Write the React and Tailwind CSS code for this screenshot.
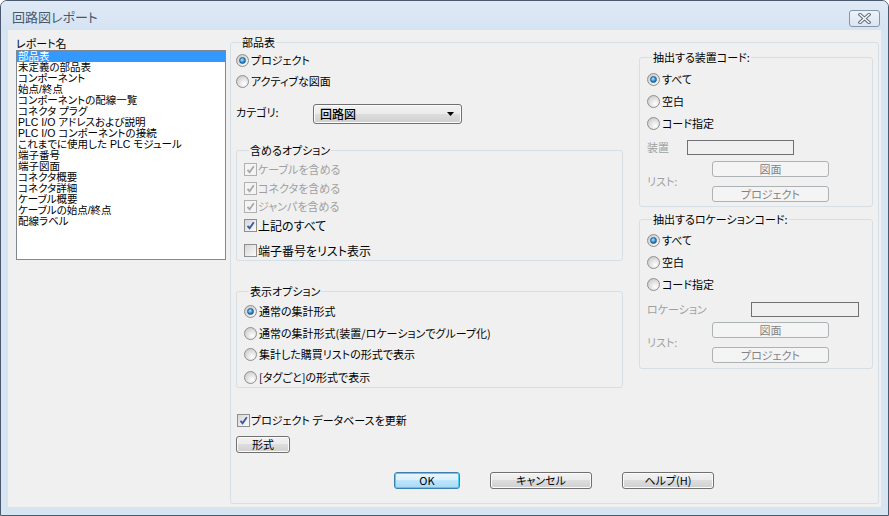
import React from 'react';

const reports = [
  '部品表',
  '未定義の部品表',
  'コンポーネント',
  '始点/終点',
  'コンポーネントの配線一覧',
  'コネクタ プラグ',
  'PLC I/O アドレスおよび説明',
  'PLC I/O コンポーネントの接続',
  'これまでに使用した PLC モジュール',
  '端子番号',
  '端子図面',
  'コネクタ概要',
  'コネクタ詳細',
  'ケーブル概要',
  'ケーブルの始点/終点',
  '配線ラベル',
];

function Radio({ checked, label, className = '' }) {
  return (
    <div className={`flex h-[13px] items-center gap-[2px] ${className}`}>
      <span className="flex h-[13px] w-[13px] shrink-0 items-center justify-center rounded-full border border-[#8e8f8f] bg-[radial-gradient(circle_at_65%_70%,#ffffff,#d0d0d0_75%)]">
        {checked && (
          <span className="h-[7px] w-[7px] rounded-full border border-[#1b5b8f] bg-[radial-gradient(circle_at_40%_35%,#b8e8ff,#2f8ad0_55%,#0f4f86)]" />
        )}
      </span>
      <span className="leading-[13px]">{label}</span>
    </div>
  );
}

function Check({ checked, disabled, label, className = '' }) {
  return (
    <div className={`flex h-[13px] items-center gap-[1px] ${className}`}>
      <span
        className={
          disabled
            ? 'flex h-[13px] w-[13px] shrink-0 items-center justify-center border border-[#b1b1b1] bg-[#f4f4f4]'
            : 'flex h-[13px] w-[13px] shrink-0 items-center justify-center border border-[#8e8f8f] bg-[linear-gradient(135deg,#d6d6d6,#fbfbfb)]'
        }
      >
        {checked && (
          <svg width="9" height="9" viewBox="0 0 9 9">
            <path
              d="M1.5 4.8 L3.6 7.2 L7.8 1.2"
              fill="none"
              stroke={disabled ? '#a9a9a9' : '#3a56a0'}
              strokeWidth="1.8"
            />
          </svg>
        )}
      </span>
      <span className={disabled ? 'leading-[13px] text-[#a0a0a0]' : 'leading-[13px]'}>{label}</span>
    </div>
  );
}

function Group({ title, className = '', children }) {
  return (
    <fieldset className={`rounded-[3px] border border-[#d5dfe5] ${className}`}>
      <legend className="ml-[5px] px-[1px] leading-[12px]">{title}</legend>
      {children}
    </fieldset>
  );
}

const btn =
  'flex items-center justify-center rounded-[3px] border border-[#707070] bg-[linear-gradient(#f2f2f2,#ebebeb_48%,#dddddd_50%,#cfcfcf)] shadow-[inset_0_0_0_1px_#fbfbfb] leading-none';
const btnOff =
  'flex items-center justify-center rounded-[3px] border border-[#adb2b5] bg-[#f4f4f4] text-[#838383] leading-none';
const btnDef =
  'flex items-center justify-center rounded-[3px] border border-[#3c7fb1] bg-[linear-gradient(#eaf6fd,#d9f0fc_48%,#bee6fd_50%,#a7d9f5)] shadow-[inset_0_0_0_1px_#48d2f8] leading-none';

function CodeGroup({ title, field, labelClass, inputClass, radioTop, fieldTop, listTop, bottom }) {
  return (
    <Group title={title} className={`px-[7px] ${bottom}`}>
      <Radio checked label="すべて" className={radioTop} />
      <Radio label="空白" className="mt-[9px]" />
      <Radio label="コード指定" className="mt-[9px]" />
      <div className={`flex h-[15px] items-center text-[#a0a0a0] ${fieldTop}`}>
        <span className={`shrink-0 leading-[15px] ${labelClass}`}>{field}</span>
        <span className={`h-[15px] border border-[#707070] bg-[#f0f0f0] ${inputClass}`} />
      </div>
      <div className={`flex items-center ${listTop}`}>
        <span className="w-[65px] text-[#a0a0a0]">リスト:</span>
        <div className="flex flex-col gap-[9px]">
          <div className={`${btnOff} h-[16px] w-[117px]`}>図面</div>
          <div className={`${btnOff} h-[16px] w-[117px]`}>プロジェクト</div>
        </div>
      </div>
    </Group>
  );
}

export default function App() {
  return (
    <div className="flex h-[516px] w-[889px] flex-col overflow-hidden rounded-t-[7px] border border-[#4a5a6c] bg-[#d7e4f2] font-['Noto_Sans_CJK_JP','Noto_Sans',sans-serif] text-[11px] text-black [font-feature-settings:'palt']">
      {/* title bar */}
      <div className="flex h-[29px] shrink-0 items-start justify-between bg-[linear-gradient(#e0eaf6,#d5e3f2)]">
        <span className="ml-[11px] mt-[9px] text-[13px] leading-[14px] text-[#4a586a]">回路図レポート</span>
        <div className="mr-[8px] mt-[9px] flex h-[17px] w-[31px] items-center justify-center rounded-[3px] border border-[#8596ab] bg-[linear-gradient(#eef3f9,#dbe5f1)]">
          <svg width="13" height="11" viewBox="0 0 13 11">
            <path d="M2 1.5 L11 9.5 M11 1.5 L2 9.5" stroke="#5d6b7c" strokeWidth="3.4" strokeLinecap="square" />
            <path d="M2 1.5 L11 9.5 M11 1.5 L2 9.5" stroke="#ffffff" strokeWidth="1.4" strokeLinecap="square" />
          </svg>
        </div>
      </div>

      {/* client area */}
      <div className="mx-[7px] flex h-[477px] shrink-0 bg-[#f0f0f0]">
        <div className="ml-[8px] mt-[7px] w-[210px]">
          <div className="h-[12px] leading-[12px]">レポート名</div>
          <div className="mt-[1px] h-[210px] border border-[#828790] bg-white font-['Liberation_Sans','Noto_Sans_CJK_JP',sans-serif] text-[10.5px]">
            {reports.map((r, i) => (
              <div
                key={r}
                className={
                  i === 0
                    ? 'h-[11px] overflow-hidden bg-[#3399ff] pl-[1px] leading-[11px] whitespace-nowrap text-white'
                    : 'h-[11px] overflow-hidden pl-[1px] leading-[11px] whitespace-nowrap'
                }
              >
                {r}
              </div>
            ))}
          </div>
        </div>

        <Group title="部品表" className="ml-[4px] mt-[6px] h-[468px] w-[649px] px-[5px]">
          <div className="flex gap-[16px]">
            {/* left column */}
            <div className="w-[387px]">
              <Radio checked label="プロジェクト" className="mt-[6px]" />
              <Radio label="アクティブな図面" className="mt-[8px]" />
              <div className="mt-[16px] flex h-[20px] items-start">
                <span className="mt-[2px] w-[77px] leading-[12px]">カテゴリ:</span>
                <div className="flex h-[20px] w-[149px] items-center justify-between rounded-[3px] border border-[#707070] bg-[linear-gradient(#f2f2f2,#ebebeb_48%,#dddddd_50%,#cfcfcf)] pl-[6px] pr-[7px] shadow-[inset_0_0_0_1px_#fbfbfb]">
                  <span className="text-[12px] font-medium leading-none">回路図</span>
                  <svg width="7" height="4" viewBox="0 0 7 4">
                    <path d="M0 0 H7 L3.5 4 Z" fill="#000" />
                  </svg>
                </div>
              </div>

              <Group title="含めるオプション" className="mt-[20px] px-[7px] pb-[3px]">
                <Check checked disabled label="ケーブルを含める" className="mt-[7px]" />
                <Check checked disabled label="コネクタを含める" className="mt-[6px]" />
                <Check checked disabled label="ジャンパを含める" className="mt-[5px]" />
                <Check checked label="上記のすべて" className="mt-[6px] text-[12px]" />
                <Check label="端子番号をリスト表示" className="mt-[12px] text-[12px]" />
              </Group>

              <Group title="表示オプション" className="mt-[24px] px-[7px] pb-[3px]">
                <Radio checked label="通常の集計形式" className="mt-[8px]" />
                <Radio label="通常の集計形式(装置/ロケーションでグループ化)" className="mt-[9px]" />
                <Radio label="集計した購買リストの形式で表示" className="mt-[8px]" />
                <Radio label="[タグごと]の形式で表示" className="mt-[10px]" />
              </Group>

              <Check checked label="プロジェクト データベースを更新" className="ml-[1px] mt-[26px]" />
              <div className={`${btn} mt-[9px] h-[17px] w-[54px]`}>形式</div>
            </div>

            {/* right column */}
            <div className="w-[234px]">
              <div className="mt-[3px]">
                <CodeGroup
                  title="抽出する装置コード:"
                  field="装置"
                  labelClass="w-[40px]"
                  inputClass="w-[107px]"
                  radioTop="mt-[10px]"
                  fieldTop="mt-[10px]"
                  listTop="mt-[6px]"
                  bottom="pb-[4px]"
                />
              </div>
              <div className="mt-[6px]">
                <CodeGroup
                  title="抽出するロケーションコード:"
                  field="ロケーション"
                  labelClass="w-[104px]"
                  inputClass="w-[108px]"
                  radioTop="mt-[9px]"
                  fieldTop="mt-[11px]"
                  listTop="mt-[5px]"
                  bottom="pb-[5px]"
                />
              </div>
            </div>
          </div>

          <div className="mt-[19px] flex">
            <div className={`${btnDef} ml-[158px] h-[17px] w-[66px]`}>OK</div>
            <div className={`${btn} ml-[30px] h-[17px] w-[102px]`}>キャンセル</div>
            <div className={`${btn} ml-[30px] h-[17px] w-[92px]`}>ヘルプ(H)</div>
          </div>
        </Group>
      </div>
    </div>
  );
}
